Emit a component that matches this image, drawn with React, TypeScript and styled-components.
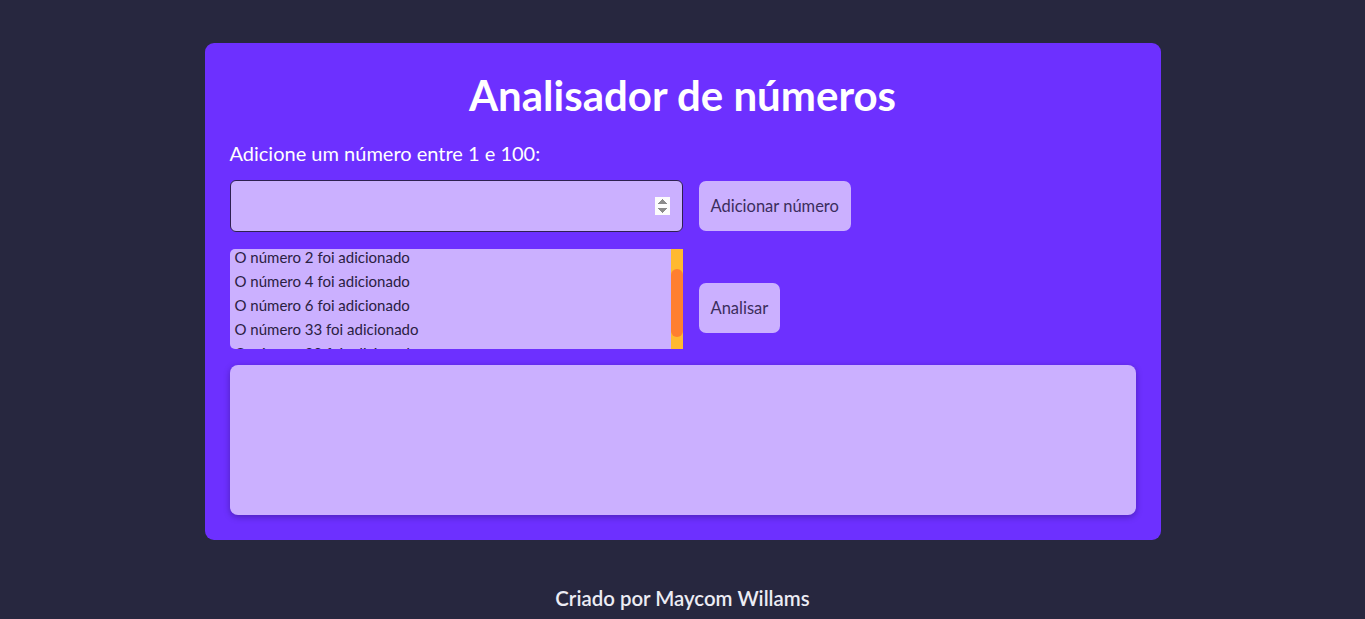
import React, { useEffect, useRef } from "react";
import styled, { createGlobalStyle } from "styled-components";

const Global = createGlobalStyle`
  html, body { margin: 0; padding: 0; background: #27273f; }
  body { font-family: "Lato", "Noto Sans", sans-serif; }
  * { box-sizing: border-box; }
`;

const Page = styled.div`
  min-height: 619px;
  display: flex;
  flex-direction: column;
  align-items: center;
  padding-top: 43px;
`;

const Card = styled.main`
  width: 956px;
  background: #6d30ff;
  border-radius: 9px;
  padding: 25px;
  display: flex;
  flex-direction: column;
`;

const Title = styled.h1`
  margin: 3px 0 0 0;
  text-align: center;
  color: #ffffff;
  font-size: 42px;
  line-height: 48px;
  font-weight: 700;
`;

const Label = styled.label`
  margin-top: 23px;
  color: #ffffff;
  font-size: 20px;
  line-height: 22px;
`;

const Row = styled.div<{ $mt: number }>`
  display: flex;
  align-items: center;
  gap: 16px;
  margin-top: ${(p) => p.$mt}px;
`;

const NumberInput = styled.input`
  width: 453px;
  height: 52px;
  background: #cbb0ff;
  border: 1px solid #2e2050;
  border-radius: 6px;
  padding: 0 12px;
  font-family: inherit;
  font-size: 16px;
  outline: none;
  &::-webkit-inner-spin-button,
  &::-webkit-outer-spin-button {
    opacity: 1;
  }
`;

const Button = styled.button<{ $offset?: number }>`
  height: 50px;
  padding: 0 12px;
  background: #cbb0ff;
  border: none;
  border-radius: 7px;
  color: #3b2d5c;
  font-family: inherit;
  font-size: 16.5px;
  cursor: pointer;
  margin-top: ${(p) => p.$offset ?? 0}px;
`;

const ListBox = styled.div`
  position: relative;
  width: 453px;
  height: 100px;
  background: #cbb0ff;
  border-radius: 5px 0 0 5px;
  display: flex;
`;

const ListScroll = styled.div`
  flex: 1;
  height: 100%;
  overflow-y: scroll;
  scrollbar-width: none;
  &::-webkit-scrollbar { display: none; }
`;

const Track = styled.div`
  position: relative;
  width: 12px;
  height: 100%;
  background: #ffb92f;
`;

const Thumb = styled.div`
  position: absolute;
  left: 0;
  right: 0;
  top: 20px;
  height: 68px;
  background: #ff7f2f;
  border-radius: 7px;
`;

const Item = styled.div`
  height: 24px;
  line-height: 24px;
  padding-left: 5px;
  color: #2a2042;
  font-size: 15px;
`;

const Result = styled.section`
  margin-top: 16px;
  height: 150px;
  background: #cbb0ff;
  border-radius: 8px;
  box-shadow: 0 2px 6px rgba(20, 10, 60, 0.35);
`;

const Footer = styled.footer`
  margin-top: 46px;
  color: #ececf4;
  font-size: 20.4px;
  font-weight: 600;
`;

const numbers = [1, 2, 4, 6, 33, 38];

export default function App() {
  const ref = useRef<HTMLDivElement>(null);
  useEffect(() => {
    if (ref.current) ref.current.scrollTop = 28;
  }, []);
  return (
    <>
      <Global />
      <Page>
        <Card>
          <Title>Analisador de números</Title>
          <Label htmlFor="num">Adicione um número entre 1 e 100:</Label>
          <Row $mt={16}>
            <NumberInput id="num" type="number" />
            <Button>Adicionar número</Button>
          </Row>
          <Row $mt={17}>
            <ListBox>
              <ListScroll ref={ref}>
                {numbers.map((n) => (
                  <Item key={n}>O número {n} foi adicionado</Item>
                ))}
              </ListScroll>
              <Track>
                <Thumb />
              </Track>
            </ListBox>
            <Button $offset={18}>Analisar</Button>
          </Row>
          <Result />
        </Card>
        <Footer>Criado por Maycom Willams</Footer>
      </Page>
    </>
  );
}
